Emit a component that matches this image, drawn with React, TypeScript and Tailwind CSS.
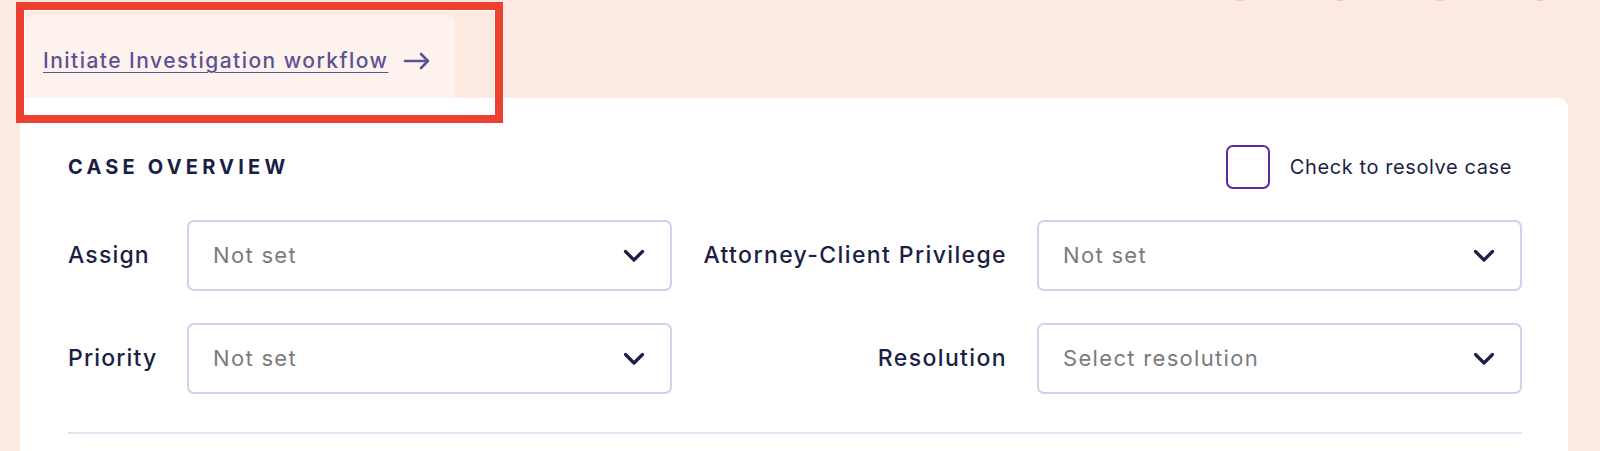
import React from "react";

const font = { fontFamily: "Inter, 'Noto Sans', sans-serif" };

function Chevron() {
  return (
    <svg width="22" height="14" viewBox="0 0 22 14" fill="none">
      <path d="M2.5 2.5 L11 11 L19.5 2.5" stroke="#1b1f45" strokeWidth="3.2" strokeLinecap="round" strokeLinejoin="round" />
    </svg>
  );
}

function Select({ value }: { value: string }) {
  return (
    <div className="flex h-[71px] items-center justify-between rounded-[7px] border-2 border-[#d3d0ea] bg-white pl-[24px] pr-[25px]">
      <span className="text-[22px] tracking-[0.06em] text-[#7b7b7b]">{value}</span>
      <Chevron />
    </div>
  );
}

export default function App() {
  return (
    <div className="relative h-[451px] w-[1600px] overflow-hidden bg-[#fce9e1]" style={font}>
      {/* circles peeking at the top */}
      <div className="absolute left-[1231px] top-[-17px] h-[18px] w-[18px] rounded-full bg-[#f2c0b0]" />
      <div className="absolute left-[1331px] top-[-17px] h-[18px] w-[18px] rounded-full bg-[#f2c0b0]" />
      <div className="absolute left-[1431px] top-[-17px] h-[18px] w-[18px] rounded-full bg-[#f2c0b0]" />
      <div className="absolute left-[1531px] top-[-17px] h-[18px] w-[18px] rounded-full bg-[#f2c0b0]" />

      <div className="pl-[20px] pr-[32px] pt-[15px]">
        {/* tab */}
        <div className="ml-[5px] flex h-[83px] w-[430px] items-center rounded-t-[8px] bg-[#fdf2ed] pl-[18px] pt-[8px]">
          <a href="#" className="text-[21px] font-medium tracking-[0.07em] text-[#5c5294] underline decoration-1 underline-offset-[4px]">
            Initiate Investigation workflow
          </a>
          <svg className="ml-[15px]" width="28" height="18" viewBox="0 0 28 18" fill="none">
            <path d="M2 9 H25 M18 2 L25 9 L18 16" stroke="#5c5294" strokeWidth="2.6" strokeLinecap="round" strokeLinejoin="round" />
          </svg>
        </div>

        {/* card */}
        <div className="h-[360px] rounded-tr-[10px] bg-white pl-[48px] pr-[46px] pt-[47px]">
          <div className="flex h-[44px] items-center justify-between">
            <h2 className="text-[20px] font-bold tracking-[0.21em] text-[#1b1f45]">CASE OVERVIEW</h2>
            <label className="mr-[10px] flex items-center">
              <span className="h-[44px] w-[44px] rounded-[7px] border-2 border-[#5b2a9e]" />
              <span className="ml-[20px] text-[20px] tracking-[0.03em] text-[#1b1f45]">Check to resolve case</span>
            </label>
          </div>

          <div className="mt-[31px] grid grid-cols-[89px_485px_305px_485px] items-center gap-x-[30px] gap-y-[32px]">
            <span className="whitespace-nowrap text-[23px] font-medium tracking-[0.05em] text-[#1b1f45]">Assign</span>
            <Select value="Not set" />
            <span className="whitespace-nowrap text-right text-[23px] font-medium tracking-[0.06em] text-[#1b1f45]">Attorney-Client Privilege</span>
            <Select value="Not set" />

            <span className="whitespace-nowrap text-[23px] font-medium tracking-[0.05em] text-[#1b1f45]">Priority</span>
            <Select value="Not set" />
            <span className="whitespace-nowrap text-right text-[23px] font-medium tracking-[0.06em] text-[#1b1f45]">Resolution</span>
            <Select value="Select resolution" />
          </div>

          <div className="mt-[38px] h-[2px] bg-[#e0e3f2]" />
        </div>
      </div>

      {/* highlight annotation */}
      <div className="pointer-events-none absolute left-[16px] top-[2px] h-[121px] w-[487px] border-[8px] border-[#ec4130] shadow-[inset_0_0_0_1px_#ffffff]" />
    </div>
  );
}
